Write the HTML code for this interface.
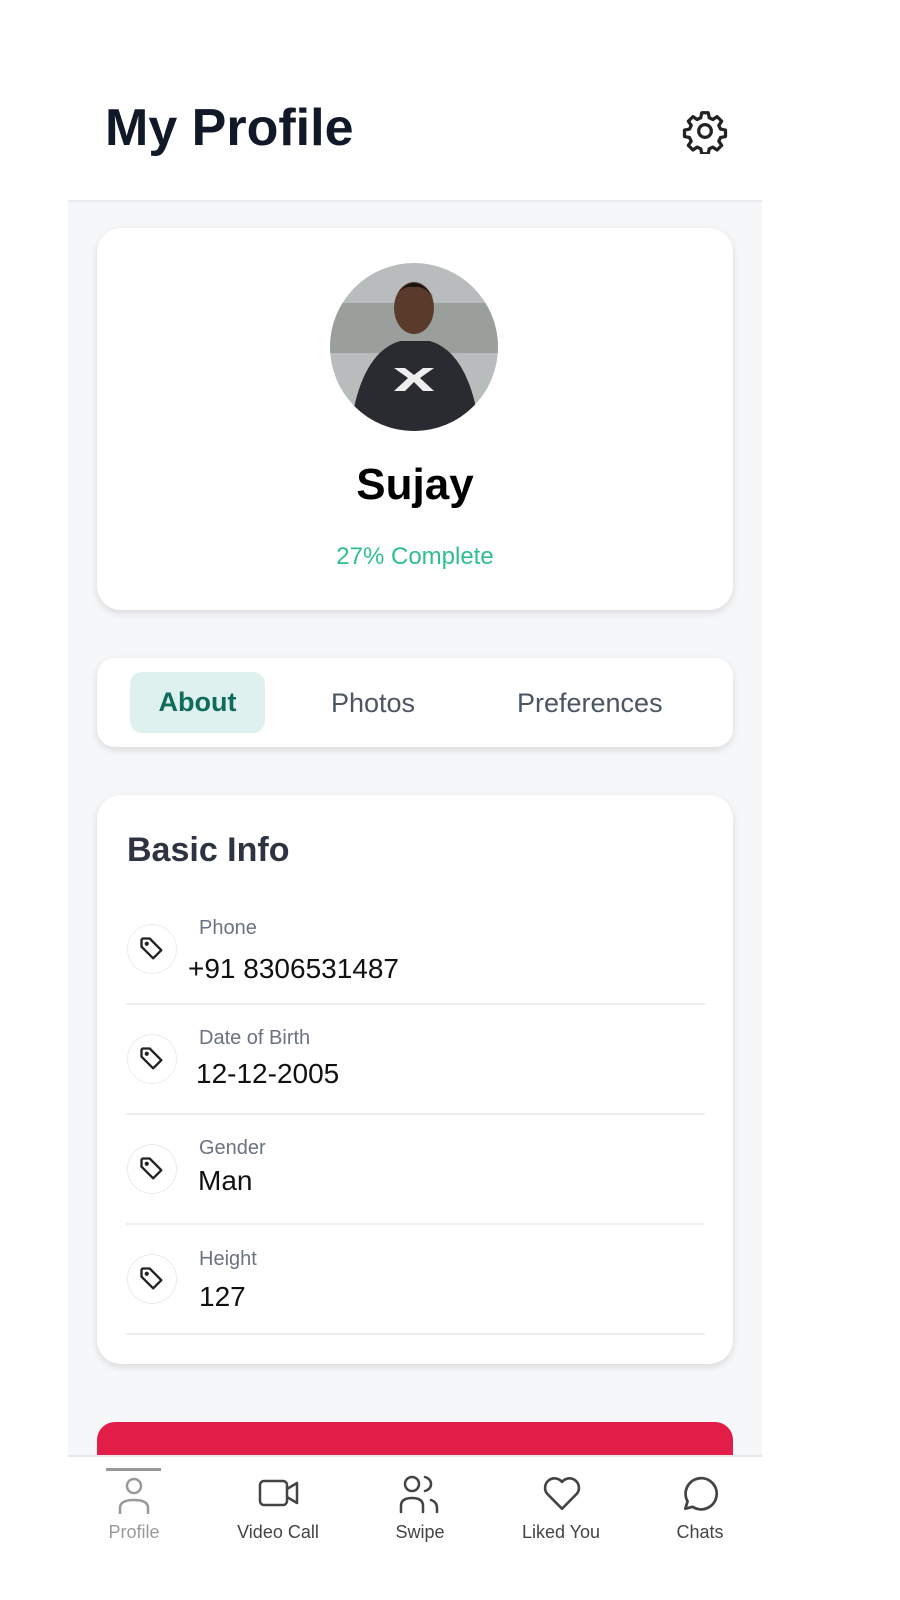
<!DOCTYPE html>
<html><head><meta charset="utf-8"><style>
*{margin:0;padding:0;box-sizing:border-box}
body{width:900px;height:1600px;background:#fff;font-family:"Liberation Sans",sans-serif;position:relative;overflow:hidden}
.abs{position:absolute}
.app{left:68px;top:200px;width:694px;height:1365px;background:#f6f7f9;border-top:2px solid #e8eaee}
.card{background:#fff;border-radius:24px;box-shadow:0 3px 8px rgba(0,0,0,.12)}
.lbl{font-size:20px;color:#6b7280;left:199px}
.val{font-size:28px;color:#111;left:196px}
.ic{left:127px;width:50px;height:50px;border-radius:50%;border:1.5px solid #ececec;background:#fff;display:flex;align-items:center;justify-content:center}
.div{left:126px;width:579px;height:1.5px;background:#eeeff2}
.nav{left:68px;top:1455px;width:694px;height:110px;background:#fff;border-top:2px solid #e5e7eb}
.ni{position:absolute;top:1522px;font-size:18px;color:#444;text-align:center;width:120px}
</style></head><body>
<div class="abs" style="left:105px;top:98px;font-size:52px;font-weight:bold;color:#111827">My Profile</div>
<svg class="abs" style="left:682px;top:108px" width="46" height="46" viewBox="0 0 24 24" fill="none" stroke="#222" stroke-width="1.7" stroke-linecap="round" stroke-linejoin="round"><path d="M10.3 2.5h3.4l.5 2.6 1.9.9 2.2-1.5 2.4 2.4-1.5 2.2.9 1.9 2.6.5v3.4l-2.6.5-.9 1.9 1.5 2.2-2.4 2.4-2.2-1.5-1.9.9-.5 2.6h-3.4l-.5-2.6-1.9-.9-2.2 1.5-2.4-2.4 1.5-2.2-.9-1.9-2.6-.5v-3.4l2.6-.5.9-1.9-1.5-2.2 2.4-2.4 2.2 1.5 1.9-.9z"/><circle cx="12" cy="12" r="3.3"/></svg>
<div class="abs app"></div>
<div class="abs card" style="left:97px;top:228px;width:636px;height:382px"></div>
<svg class="abs" style="left:330px;top:263px" width="168" height="168" viewBox="0 0 168 168"><defs><clipPath id="c"><circle cx="84" cy="84" r="84"/></clipPath></defs><g clip-path="url(#c)"><rect width="168" height="168" fill="#b9bcbc"/><rect y="40" width="168" height="50" fill="#9a9f9c"/><path d="M20 168 Q30 90 70 78 L100 78 Q140 90 150 168Z" fill="#2a2b30"/><ellipse cx="84" cy="45" rx="20" ry="26" fill="#5a3a2a"/><path d="M64 35 Q84 5 104 35 Q94 22 84 24 Q72 22 64 35Z" fill="#1a1410"/><path d="M64 105 L78 115 L64 128 L75 128 L84 119 L93 128 L104 128 L90 115 L104 105 L93 105 L84 112 L75 105Z" fill="#eee"/></g></svg>
<div class="abs" style="left:97px;width:636px;top:460px;text-align:center;font-size:44px;font-weight:bold;color:#000">Sujay</div>
<div class="abs" style="left:97px;width:636px;top:543px;text-align:center;font-size:24px;color:#2fbf8f">27% Complete</div>
<div class="abs card" style="left:97px;top:658px;width:636px;height:89px;border-radius:18px"></div>
<div class="abs" style="left:130px;top:672px;width:135px;height:61px;background:#dff1ee;border-radius:12px;color:#0f6b5c;font-weight:bold;font-size:27px;text-align:center;line-height:61px">About</div>
<div class="abs" style="left:331px;top:688px;font-size:27px;color:#4b5563">Photos</div>
<div class="abs" style="left:517px;top:688px;font-size:27px;color:#4b5563">Preferences</div>
<div class="abs card" style="left:97px;top:795px;width:636px;height:569px"></div>
<div class="abs" style="left:127px;top:831px;font-size:34px;font-weight:bold;color:#2d3340">Basic Info</div>

<div class="abs ic" style="top:924px"><svg width="28" height="28" viewBox="0 0 24 24" fill="none" stroke="#222" stroke-width="2" stroke-linejoin="round"><path d="M3 4v6l10 10 7-7L10 3H4z"/><circle cx="7.5" cy="7.5" r=".8" fill="#222"/></svg></div>
<div class="abs lbl" style="top:917px">Phone</div>
<div class="abs val" style="top:953px;left:188px">+91 8306531487</div>
<div class="abs div" style="top:1003px"></div>

<div class="abs ic" style="top:1034px"><svg width="28" height="28" viewBox="0 0 24 24" fill="none" stroke="#222" stroke-width="2" stroke-linejoin="round"><path d="M3 4v6l10 10 7-7L10 3H4z"/><circle cx="7.5" cy="7.5" r=".8" fill="#222"/></svg></div>
<div class="abs lbl" style="top:1027px">Date of Birth</div>
<div class="abs val" style="top:1058px">12-12-2005</div>
<div class="abs div" style="top:1113px"></div>

<div class="abs ic" style="top:1144px"><svg width="28" height="28" viewBox="0 0 24 24" fill="none" stroke="#222" stroke-width="2" stroke-linejoin="round"><path d="M3 4v6l10 10 7-7L10 3H4z"/><circle cx="7.5" cy="7.5" r=".8" fill="#222"/></svg></div>
<div class="abs lbl" style="top:1137px">Gender</div>
<div class="abs val" style="top:1165px;left:198px">Man</div>
<div class="abs div" style="top:1223px"></div>

<div class="abs ic" style="top:1254px"><svg width="28" height="28" viewBox="0 0 24 24" fill="none" stroke="#222" stroke-width="2" stroke-linejoin="round"><path d="M3 4v6l10 10 7-7L10 3H4z"/><circle cx="7.5" cy="7.5" r=".8" fill="#222"/></svg></div>
<div class="abs lbl" style="top:1248px">Height</div>
<div class="abs val" style="top:1281px;left:199px">127</div>
<div class="abs div" style="top:1333px"></div>

<div class="abs" style="left:97px;top:1422px;width:636px;height:60px;background:#e11d48;border-radius:18px 18px 0 0"></div>
<div class="abs nav"></div>
<div class="abs" style="left:106px;top:1468px;width:55px;height:3px;background:#999"></div>
<svg class="abs" style="left:114px;top:1474px" width="40" height="42" viewBox="0 0 40 42" fill="none" stroke="#999" stroke-width="2.5"><circle cx="20" cy="12" r="7"/><path d="M6 40v-6q0-8 14-8t14 8v6"/></svg>
<svg class="abs" style="left:257px;top:1477px" width="44" height="32" viewBox="0 0 44 32" fill="none" stroke="#444" stroke-width="2.5" stroke-linejoin="round"><rect x="3" y="4" width="27" height="24" rx="4"/><path d="M30 12l10-6v20l-10-6"/></svg>
<svg class="abs" style="left:398px;top:1472px" width="44" height="42" viewBox="0 0 44 42" fill="none" stroke="#444" stroke-width="2.5" stroke-linecap="round"><circle cx="14" cy="12" r="7"/><path d="M3 40v-6q0-8 11-8t11 8v6M27 5q6 2 6 7t-6 7M33 28q6 2 6 8v4"/></svg>
<svg class="abs" style="left:540px;top:1472px" width="44" height="42" viewBox="0 0 24 24" fill="none" stroke="#444" stroke-width="1.5" stroke-linejoin="round"><path d="M12 21l-8.5-8.6a5 5 0 0 1 8.5-6.7 5 5 0 0 1 8.5 6.7z"/></svg>
<svg class="abs" style="left:678px;top:1472px" width="44" height="44" viewBox="0 0 24 24" fill="none" stroke="#444" stroke-width="1.5" stroke-linejoin="round"><path d="M4 20l1.2-4A8.5 8.5 0 1 1 8 19z"/></svg>
<div class="ni" style="left:74px;color:#999">Profile</div>
<div class="ni" style="left:218px">Video Call</div>
<div class="ni" style="left:360px">Swipe</div>
<div class="ni" style="left:501px">Liked You</div>
<div class="ni" style="left:640px">Chats</div>
</body></html>
